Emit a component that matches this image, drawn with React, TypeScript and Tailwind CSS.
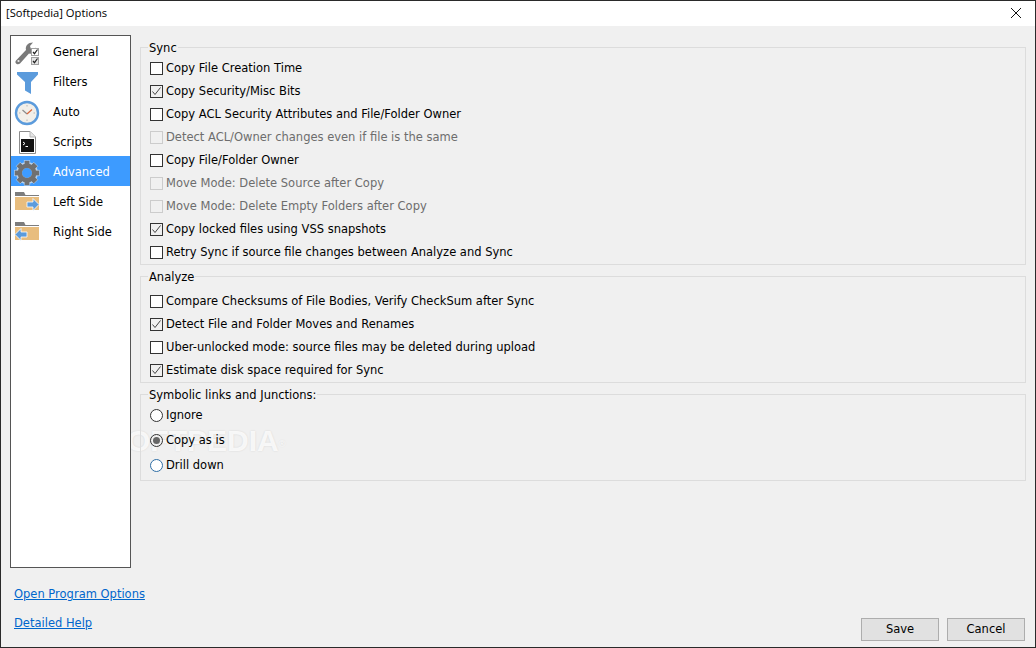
import React from "react";

type Option = { label: string; checked?: boolean; disabled?: boolean };

const syncOptions: Option[] = [
  { label: "Copy File Creation Time" },
  { label: "Copy Security/Misc Bits", checked: true },
  { label: "Copy ACL Security Attributes and File/Folder Owner" },
  { label: "Detect ACL/Owner changes even if file is the same", disabled: true },
  { label: "Copy File/Folder Owner" },
  { label: "Move Mode: Delete Source after Copy", disabled: true },
  { label: "Move Mode: Delete Empty Folders after Copy", disabled: true },
  { label: "Copy locked files using VSS snapshots", checked: true },
  { label: "Retry Sync if source file changes between Analyze and Sync" },
];

const analyzeOptions: Option[] = [
  { label: "Compare Checksums of File Bodies, Verify CheckSum after Sync" },
  { label: "Detect File and Folder Moves and Renames", checked: true },
  { label: "Uber-unlocked mode: source files may be deleted during upload" },
  { label: "Estimate disk space required for Sync", checked: true },
];

function GeneralIcon() {
  return (
    <svg width="26" height="26" viewBox="0 0 26 26">
      <path d="M2 20.5 L12 10 C11 6 14 2.5 19 2.5 L16 6 L17 9 L20 9.5 L22 7.5 C22.5 11 19 14.5 15 13.5 L6 23.5 C3.5 25.5 0 23 2 20.5 Z" fill="#7a7a7a" />
      <circle cx="4.5" cy="21" r="1.1" fill="#e8e8e8" />
      <rect x="17.5" y="8.5" width="7" height="7" fill="#fff" stroke="#a0a0a0" />
      <path d="M19 12 L20.5 13.7 L23.5 9.5" fill="none" stroke="#222" strokeWidth="1.2" />
      <rect x="17.5" y="17.5" width="7" height="7" fill="#e4e4e4" stroke="#a0a0a0" />
      <path d="M19 21 L20.5 22.7 L23.5 18.5" fill="none" stroke="#222" strokeWidth="1.2" />
    </svg>
  );
}

function FilterIcon() {
  return (
    <svg width="26" height="26" viewBox="0 0 26 26">
      <path d="M3 2 H24 V4.5 L17 12 V24 L11 20.5 V12 L3 4.5 Z" fill="#5b9bdc" />
    </svg>
  );
}

function ClockIcon() {
  return (
    <svg width="26" height="26" viewBox="0 0 26 26">
      <circle cx="13" cy="13" r="11" fill="#f2efe9" stroke="#5b9bdc" strokeWidth="2.4" />
      <path d="M13 5 V6.5 M13 19.5 V21 M5 13 H6.5 M19.5 13 H21" stroke="#b5b5b5" />
      <path d="M8.5 10 L13 14" stroke="#8a8a8a" strokeWidth="1.2" />
      <path d="M13 14 L18 9.5" stroke="#d9653b" strokeWidth="1.2" />
    </svg>
  );
}

function ScriptIcon() {
  return (
    <svg width="26" height="26" viewBox="0 0 26 26">
      <path d="M5.5 1.5 H16 L21.5 7 V23.5 H5.5 Z" fill="#fff" stroke="#8c8c8c" />
      <path d="M16 1.5 V7 H21.5" fill="#e6e6e6" stroke="#b5b5b5" />
      <rect x="7" y="9" width="13" height="13" fill="#111" />
      <path d="M9 12 L11 13.5 L9 15" fill="none" stroke="#fff" />
      <path d="M11.5 16.5 H14" stroke="#fff" />
    </svg>
  );
}

function GearIcon() {
  const angles = [0, 45, 90, 135, 180, 225, 270, 315];
  return (
    <svg width="26" height="26" viewBox="0 0 26 26">
      <circle cx="13" cy="13" r="8" fill="none" stroke="#b9d3ee" strokeWidth="6" />
      {angles.map((a) => (
        <rect key={a} x="10.2" y="0.6" width="5.6" height="6" fill="#707070" stroke="#b9d3ee" strokeWidth="0.6" transform={`rotate(${a} 13 13)`} />
      ))}
      <circle cx="13" cy="13" r="7.2" fill="none" stroke="#707070" strokeWidth="4.4" />
    </svg>
  );
}

function FolderIcon({ side }: { side: "left" | "right" }) {
  return (
    <svg width="26" height="26" viewBox="0 0 26 26">
      <path d="M1 2 H10 L11.5 5 H25 V6 H1 Z" fill="#7d7d7d" />
      <rect x="1" y="7" width="24" height="13" fill="#e8bd7e" />
      {side === "left" ? (
        <path d="M13 12 H19 V8.5 L25 14.5 L19 20.5 V17 H13 Z" fill="#5b9bdc" stroke="#fff" strokeWidth="0.8" />
      ) : (
        <path d="M13 12 H7 V8.5 L1 14.5 L7 20.5 V17 H13 Z" fill="#5b9bdc" stroke="#fff" strokeWidth="0.8" />
      )}
    </svg>
  );
}

const navItems = [
  { label: "General", icon: <GeneralIcon /> },
  { label: "Filters", icon: <FilterIcon /> },
  { label: "Auto", icon: <ClockIcon /> },
  { label: "Scripts", icon: <ScriptIcon /> },
  { label: "Advanced", icon: <GearIcon />, active: true },
  { label: "Left Side", icon: <FolderIcon side="left" /> },
  { label: "Right Side", icon: <FolderIcon side="right" /> },
];

function CheckRow({ label, checked, disabled }: Option) {
  return (
    <label className={`flex h-[23px] items-center gap-[3px] ${disabled ? "text-[#6d6d6d]" : "text-[#000]"}`}>
      <span
        className={`flex h-[13px] w-[13px] items-center justify-center border ${
          disabled ? "border-[#cccccc] bg-[#f0f0f0]" : checked ? "border-[#333333] bg-[#f0f0f0]" : "border-[#333333] bg-white"
        }`}
      >
        {checked && (
          <svg width="11" height="11" viewBox="0 0 11 11">
            <path d="M1.5 5.5 L4 8.5 L9.5 1.5" fill="none" stroke="#444" strokeWidth="1" />
          </svg>
        )}
      </span>
      {label}
    </label>
  );
}

function RadioRow({ label, selected, focused }: { label: string; selected?: boolean; focused?: boolean }) {
  return (
    <label className="flex h-[25px] items-center gap-[3px]">
      <span
        className={`flex h-[13px] w-[13px] items-center justify-center rounded-full border ${
          focused ? "border-[#2f6ea5] bg-white" : selected ? "border-[#333333] bg-[#f0f0f0]" : "border-[#333333] bg-white"
        }`}
      >
        {selected && <span className="h-[7px] w-[7px] rounded-full bg-[#666666]" />}
      </span>
      {label}
    </label>
  );
}

function Group({ title, children, className }: { title: string; children: React.ReactNode; className: string }) {
  return (
    <fieldset className={`border border-[#dcdcdc] pl-[8px] ${className}`}>
      <legend className="ml-[-1px] px-[1px] leading-[14px]">
        <span className="relative top-[1px]">{title}</span>
      </legend>
      <div className="pl-[1px]">{children}</div>
    </fieldset>
  );
}

export default function App() {
  return (
    <div
      className="relative flex h-[648px] w-[1036px] flex-col overflow-hidden border border-[#2a2a2a] bg-[#f0f0f0] text-[11.5px] text-black"
      style={{ fontFamily: '"DejaVu Sans", sans-serif' }}
    >
      {/* Softpedia watermark, sits behind the option labels */}
      <span className="pointer-events-none absolute left-[106px] top-[417px] font-['Liberation_Sans',sans-serif] text-[30px] font-bold text-white/80 [text-shadow:0_0_2px_rgba(0,0,0,0.12)]">
        SOFTPEDIA
        <sup className="text-[9px] font-normal">®</sup>
      </span>

      <div className="relative flex h-[25px] shrink-0 items-center justify-between bg-white pb-[1px] pl-[5px] pr-[13px]">
        <span className="font-['Open_Sans',sans-serif] text-[11.2px]">[Softpedia] Options</span>
        <svg width="12" height="12" viewBox="0 0 12 12">
          <path d="M1 1 L11 11 M11 1 L1 11" stroke="#111" strokeWidth="1" />
        </svg>
      </div>

      <div className="relative flex min-h-0 flex-1 pl-[9px] pr-[9px] pt-[9px]">
        {/* Left column */}
        <div className="flex w-[121px] shrink-0 flex-col">
          <div className="h-[533px] border border-[#555555] bg-white">
            {navItems.map((item) => (
              <div
                key={item.label}
                className={`flex h-[30px] items-center gap-[13px] pl-[3px] pt-[3px] ${item.active ? "bg-[#3d9bff] text-white" : ""}`}
              >
                {item.icon}
                {item.label}
              </div>
            ))}
          </div>
          <div className="mt-[19px] flex flex-col gap-[15px] whitespace-nowrap pl-[4px] text-[#0066cc] underline">
            <span className="leading-[14px]">Open Program Options</span>
            <span className="leading-[14px]">Detailed Help</span>
          </div>
        </div>

        {/* Right column */}
        <div className="ml-[9px] flex min-w-0 flex-1 flex-col pt-[5px]">
          <Group title="Sync" className="h-[225px]">
            <div className="pt-[3px]">
              {syncOptions.map((o) => (
                <CheckRow key={o.label} {...o} />
              ))}
            </div>
          </Group>
          <Group title="Analyze" className="mt-[4px] h-[114px]">
            <div className="pt-[7px]">
              {analyzeOptions.map((o) => (
                <CheckRow key={o.label} {...o} />
              ))}
            </div>
          </Group>
          <Group title="Symbolic links and Junctions:" className="mt-[4px] h-[94px]">
            <div className="pt-[2px]">
              <RadioRow label="Ignore" />
              <RadioRow label="Copy as is" selected />
              <RadioRow label="Drill down" focused />
            </div>
          </Group>
          <div className="mt-auto mb-[6px] flex justify-end gap-[8px] pr-[1px]">
            <button className="h-[23px] w-[78px] border border-[#adadad] bg-[#e1e1e1]">Save</button>
            <button className="h-[23px] w-[78px] border border-[#adadad] bg-[#e1e1e1]">Cancel</button>
          </div>
        </div>
      </div>
    </div>
  );
}
